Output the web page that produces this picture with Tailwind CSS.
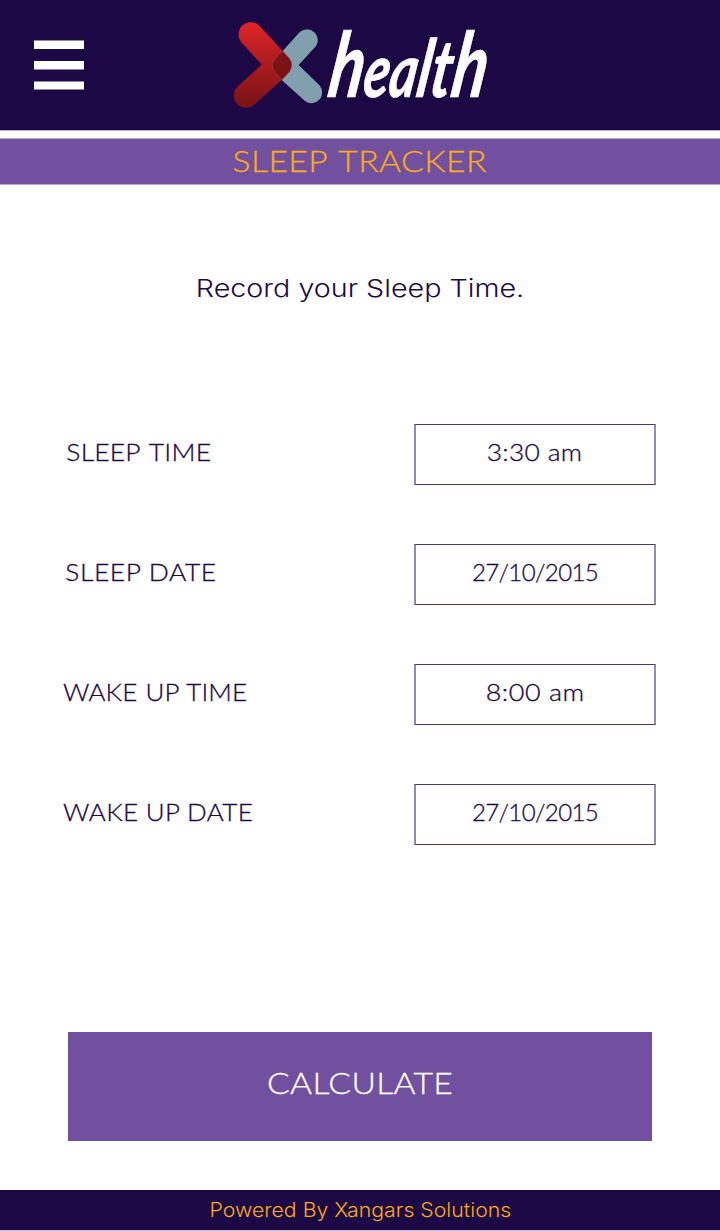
<!DOCTYPE html>
<html lang="en">
<head>
<meta charset="utf-8">
<title>Sleep Tracker</title>
<script src="https://cdn.jsdelivr.net/npm/@tailwindcss/browser@4"></script>
</head>
<body class="bg-white font-['Lato',sans-serif] font-light text-[#1b0844]">
<div class="flex h-[1231px] w-[720px] flex-col overflow-hidden">
  <header class="flex h-[131px] shrink-0 items-start border-b border-[#b9b2c7] bg-[#1b0844]">
    <button class="mt-10 ml-[34px]" aria-label="Menu">
      <svg class="block" width="50" height="50" viewBox="0 0 50 50" fill="#fff"><path d="M0 .6h50V9H0zM0 21h50v8.6H0zM0 41.4h50v8.1H0z"/></svg>
    </button>
    <svg class="mt-2.5 ml-[136px] block overflow-visible" width="280" height="110" viewBox="0 0 280 110">
      <defs><linearGradient id="red" x1="0" y1="0" x2="0" y2="1"><stop offset="0" stop-color="#e02428"/><stop offset="1" stop-color="#761215"/></linearGradient></defs>
      <g transform="translate(0 .6) scale(.33333)">
        <path fill="#829fae" d="M238 66A32 32 0 0 1 284 111L236 163 299 225A32 32 0 0 1 255 271L185 208 164 184Q150 163 164 146L188 121Z"/>
        <path fill="url(#red)" d="M66 97A36 36 0 0 1 119 46L188 121 208 144Q222 163 208 184L185 208 101 284A37 37 0 0 1 50 231L125 162Z"/>
        <path fill="#7b1214" stroke="#87545b" stroke-width="1.5" d="M188 121 208 144Q222 163 208 184L185 208 164 184Q150 163 164 146Z"/>
      </g>
      <text transform="translate(106 87) skewX(-9)" textLength="158" lengthAdjust="spacingAndGlyphs" fill="#fff" stroke="#fff" stroke-width=".6" font-family="Lato" font-style="italic" font-weight="700" font-size="90">h<tspan font-size="74">ea</tspan><tspan font-size="80">lt</tspan>h</text>
    </svg>
  </header>
  <div class="mt-[7px] flex h-[47px] shrink-0 items-center justify-center border-y border-[#b8a8d0] bg-[#71519f]">
    <h1 class="scale-x-116 pb-0.5 text-[29px] leading-[44px] font-light tracking-[.4px] text-[#fbaa19] [-webkit-text-stroke:.3px] [word-spacing:2px]">SLEEP TRACKER</h1>
  </div>
  <main class="flex flex-1 flex-col">
    <p class="mt-[88px] scale-x-[1.195] text-center font-['Inter'] text-[24px] leading-8 font-light">Record your Sleep Time.</p>
    <div class="mt-[119px] flex flex-col gap-[59px] pr-16 pl-[63px] [-webkit-text-stroke:.3px]">
      <div class="flex h-[61px] items-center justify-between">
        <span class="origin-left scale-x-110 pb-1.5 pl-[3px] text-2xl tracking-[.2px] [word-spacing:2px]">SLEEP TIME</span>
        <div class="flex h-[61px] w-[242px] items-center justify-center border-x-2 border-y border-x-[#9389ab] border-y-[#493873]"><span class="scale-x-110 pb-1.5 text-2xl tracking-[.3px]">3:30 am</span></div>
      </div>
      <div class="flex h-[61px] items-center justify-between">
        <span class="origin-left scale-x-110 pb-1.5 pl-0.5 text-2xl tracking-[.55px]">SLEEP DATE</span>
        <div class="flex h-[61px] w-[242px] items-center justify-center border-x-2 border-y border-x-[#9389ab] border-y-[#493873]"><span class="pb-1.5 text-2xl tracking-[-.6px]">27/10/2015</span></div>
      </div>
      <div class="flex h-[61px] items-center justify-between">
        <span class="origin-left scale-x-108 pb-1.5 text-2xl tracking-[.1px] [word-spacing:1px]">WAKE UP TIME</span>
        <div class="flex h-[61px] w-[242px] items-center justify-center border-x-2 border-y border-x-[#9389ab] border-y-[#493873]"><span class="scale-x-112 pb-1.5 text-2xl tracking-[.5px]">8:00 am</span></div>
      </div>
      <div class="flex h-[61px] items-center justify-between">
        <span class="origin-left scale-x-108 pb-1.5 text-2xl tracking-[.35px]">WAKE UP DATE</span>
        <div class="flex h-[61px] w-[242px] items-center justify-center border-x-2 border-y border-x-[#9389ab] border-y-[#493873]"><span class="pb-1.5 text-2xl tracking-[-.6px]">27/10/2015</span></div>
      </div>
    </div>
    <button class="mt-[187px] ml-[68px] flex h-[109px] w-[584px] items-center justify-center bg-[#71519f] text-white">
      <span class="scale-x-112 pb-2.5 text-[30px] leading-9 tracking-[.3px] [-webkit-text-stroke:.3px]">CALCULATE</span>
    </button>
  </main>
  <footer class="flex h-[41px] shrink-0 items-center justify-center border-b border-[#c6c1d0] bg-[#1b0844] text-[#fbaa19]">
    <span class="scale-x-109 pt-0.5 font-['Inter'] text-[19.5px] font-light">Powered By Xangars Solutions</span>
  </footer>
</div>
</body>
</html>
